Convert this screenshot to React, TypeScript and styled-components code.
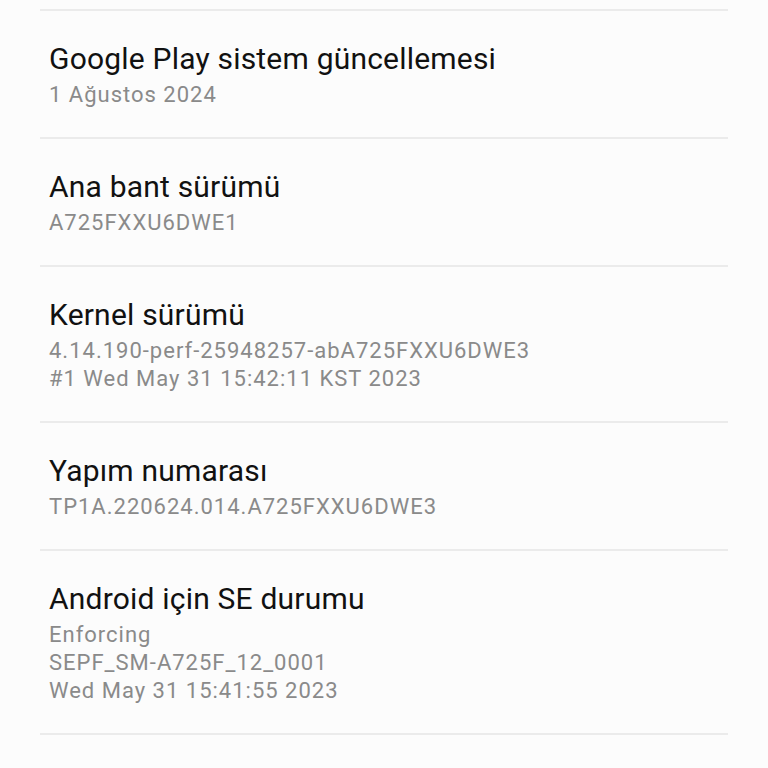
import { createGlobalStyle, styled } from "styled-components";

const GlobalStyle = createGlobalStyle`
  html, body {
    margin: 0;
    padding: 0;
    background: #fcfcfc;
  }
  body {
    font-family: Roboto, "Noto Sans", sans-serif;
  }
`;

type Info = { title: string; lines: string[] };

const items: Info[] = [
  { title: "Google Play sistem güncellemesi", lines: ["1 Ağustos 2024"] },
  { title: "Ana bant sürümü", lines: ["A725FXXU6DWE1"] },
  {
    title: "Kernel sürümü",
    lines: ["4.14.190-perf-25948257-abA725FXXU6DWE3", "#1 Wed May 31 15:42:11 KST 2023"],
  },
  { title: "Yapım numarası", lines: ["TP1A.220624.014.A725FXXU6DWE3"] },
  {
    title: "Android için SE durumu",
    lines: ["Enforcing", "SEPF_SM-A725F_12_0001", "Wed May 31 15:41:55 2023"],
  },
];

const App = () => {
  return (
    <>
      <GlobalStyle />
      <Page>
        <List>
          <Divider />
          {items.map((item) => (
            <div key={item.title}>
              <Item>
                <Title>{item.title}</Title>
                <Summary>
                  {item.lines.map((line) => (
                    <Line key={line}>{line}</Line>
                  ))}
                </Summary>
              </Item>
              <Divider />
            </div>
          ))}
        </List>
      </Page>
    </>
  );
};

const Page = styled.div`
  height: 768px;
  padding-top: 9px;
  box-sizing: border-box;
  overflow: hidden;
`;

const List = styled.div`
  margin: 0 40px;
`;

const Divider = styled.div`
  height: 2px;
  background: #ebebeb;
`;

const Item = styled.div`
  display: flex;
  flex-direction: column;
  gap: 2px;
  padding: 28px 9px;
`;

const Title = styled.div`
  font-size: 30px;
  line-height: 40px;
  letter-spacing: 0.2px;
  color: #111111;
  white-space: nowrap;
`;

const Summary = styled.div`
  display: flex;
  flex-direction: column;
`;

const Line = styled.div`
  font-size: 22px;
  line-height: 28px;
  letter-spacing: 1px;
  color: #8a8a8a;
  white-space: nowrap;
`;

export default App;
